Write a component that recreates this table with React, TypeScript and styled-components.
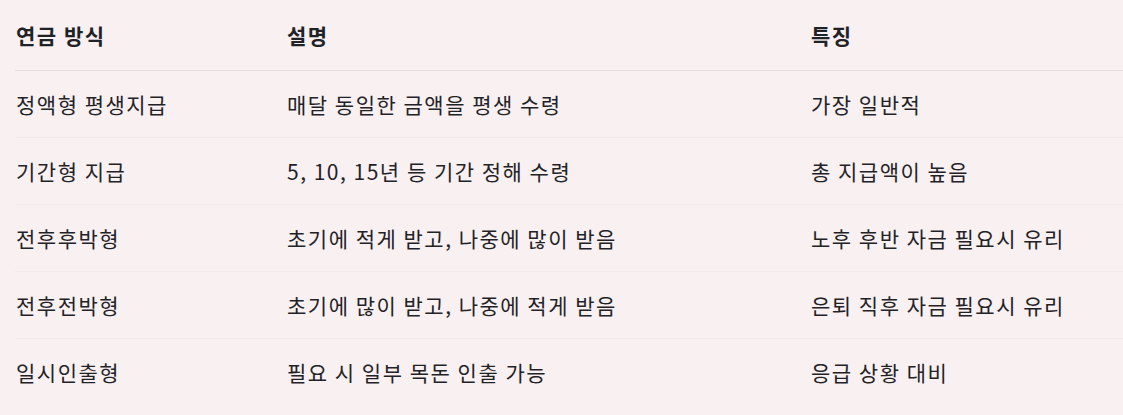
import styled, { createGlobalStyle } from 'styled-components';

const GlobalStyle = createGlobalStyle`
  html, body {
    margin: 0;
    padding: 0;
    background: #f9f0f1;
  }
  body {
    font-family: "Noto Sans CJK KR", "Noto Sans", sans-serif;
    color: #1f2328;
  }
`;

const Wrapper = styled.div`
  padding-left: 15px;
  overflow: hidden;
`;

const Table = styled.table`
  width: 1120px;
  border-collapse: collapse;
  table-layout: fixed;
  font-size: 21px;
  letter-spacing: 1.5px;
`;

const HeadCell = styled.th<{ width?: number }>`
  width: ${(p) => (p.width ? `${p.width}px` : 'auto')};
  text-align: left;
  font-weight: 700;
  height: 70px;
  padding: 0 0 0 1px;
  border-bottom: 1px solid #e4dfe0;
  vertical-align: middle;
`;

const Row = styled.tr`
  border-bottom: 1px solid #f3e9ea;

  &:last-child {
    border-bottom: none;
  }
`;

const Cell = styled.td`
  height: 66px;
  padding: 0 0 0 1px;
  font-weight: 400;
  vertical-align: middle;
`;

const rows = [
  ['정액형 평생지급', '매달 동일한 금액을 평생 수령', '가장 일반적'],
  ['기간형 지급', '5, 10, 15년 등 기간 정해 수령', '총 지급액이 높음'],
  ['전후후박형', '초기에 적게 받고, 나중에 많이 받음', '노후 후반 자금 필요시 유리'],
  ['전후전박형', '초기에 많이 받고, 나중에 적게 받음', '은퇴 직후 자금 필요시 유리'],
  ['일시인출형', '필요 시 일부 목돈 인출 가능', '응급 상황 대비'],
];

export default function App() {
  return (
    <>
      <GlobalStyle />
      <Wrapper>
        <Table>
          <thead>
            <tr>
              <HeadCell width={270}>연금 방식</HeadCell>
              <HeadCell width={523}>설명</HeadCell>
              <HeadCell>특징</HeadCell>
            </tr>
          </thead>
          <tbody>
            {rows.map((r) => (
              <Row key={r[0]}>
                {r.map((c, i) => (
                  <Cell key={i}>{c}</Cell>
                ))}
              </Row>
            ))}
          </tbody>
        </Table>
      </Wrapper>
    </>
  );
}
